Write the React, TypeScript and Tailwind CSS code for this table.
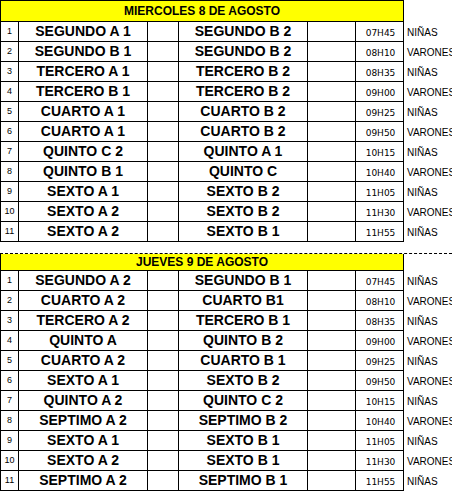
const days = [
  {
    title: 'MIERCOLES 8 DE AGOSTO',
    rows: [
      ['SEGUNDO A 1', 'SEGUNDO B 2', '07H45', 'NIÑAS'],
      ['SEGUNDO B 1', 'SEGUNDO B 2', '08H10', 'VARONES'],
      ['TERCERO A 1', 'TERCERO B 2', '08H35', 'NIÑAS'],
      ['TERCERO B 1', 'TERCERO B 2', '09H00', 'VARONES'],
      ['CUARTO A 1', 'CUARTO B 2', '09H25', 'NIÑAS'],
      ['CUARTO A 1', 'CUARTO B 2', '09H50', 'VARONES'],
      ['QUINTO C 2', 'QUINTO A 1', '10H15', 'NIÑAS'],
      ['QUINTO B 1', 'QUINTO C', '10H40', 'VARONES'],
      ['SEXTO A 1', 'SEXTO B 2', '11H05', 'NIÑAS'],
      ['SEXTO A 2', 'SEXTO B 2', '11H30', 'VARONES'],
      ['SEXTO A 2', 'SEXTO B 1', '11H55', 'NIÑAS'],
    ],
  },
  {
    title: 'JUEVES 9 DE AGOSTO',
    rows: [
      ['SEGUNDO A 2', 'SEGUNDO B 1', '07H45', 'NIÑAS'],
      ['CUARTO A 2', 'CUARTO B1', '08H10', 'VARONES'],
      ['TERCERO A 2', 'TERCERO B 1', '08H35', 'NIÑAS'],
      ['QUINTO A', 'QUINTO B 2', '09H00', 'VARONES'],
      ['CUARTO A 2', 'CUARTO B 1', '09H25', 'NIÑAS'],
      ['SEXTO A 1', 'SEXTO B 2', '09H50', 'VARONES'],
      ['QUINTO A 2', 'QUINTO C 2', '10H15', 'NIÑAS'],
      ['SEPTIMO A 2', 'SEPTIMO B 2', '10H40', 'VARONES'],
      ['SEXTO A 1', 'SEXTO B 1', '11H05', 'NIÑAS'],
      ['SEXTO A 2', 'SEXTO B 1', '11H30', 'VARONES'],
      ['SEPTIMO A 2', 'SEPTIMO B 1', '11H55', 'NIÑAS'],
    ],
  },
]

const Row = ({ n, row }: { n: number; row: string[] }) => (
  <div className="flex h-[20px]">
    <div className="flex w-[404px] shrink-0 border-b border-l border-black">
      <div className="flex w-[18px] items-center justify-center border-r border-black text-[9px]">{n}</div>
      <div className="flex w-[129px] items-center justify-center border-r border-black text-[14px] font-bold">{row[0]}</div>
      <div className="w-[31px] border-r border-black" />
      <div className="flex w-[129px] items-center justify-center border-r border-black text-[14px] font-bold">{row[1]}</div>
      <div className="w-[48px] border-r border-black" />
      <div className="flex w-[48px] items-end justify-center border-r border-black pb-[1px] pl-[2px] font-['DejaVu_Sans',sans-serif] text-[9px]">
        {row[2]}
      </div>
    </div>
    <div className="flex items-end whitespace-nowrap pb-[2px] pl-[3px] text-[10px]">{row[3]}</div>
  </div>
)

export default function App() {
  return (
    <div className="w-[452px] h-[492px] overflow-hidden bg-white text-black font-['Liberation_Sans',Arial,sans-serif]">
      {/* day 1 */}
      <div className="flex w-[404px] h-[22px] items-center justify-center border-y border-x border-black bg-[#ffff00] text-[12px] font-bold">
        {days[0].title}
      </div>
      {days[0].rows.map((r, i) => (
        <Row key={i} n={i + 1} row={r} />
      ))}

      {/* day 2 */}
      <div className="mt-[11px] border-t border-dashed border-black">
        <div className="flex w-[404px] h-[17px] items-center justify-center border-b border-x border-black bg-[#ffff00] text-[12px] font-bold">
          {days[1].title}
        </div>
      </div>
      {days[1].rows.map((r, i) => (
        <Row key={i} n={i + 1} row={r} />
      ))}
    </div>
  )
}
